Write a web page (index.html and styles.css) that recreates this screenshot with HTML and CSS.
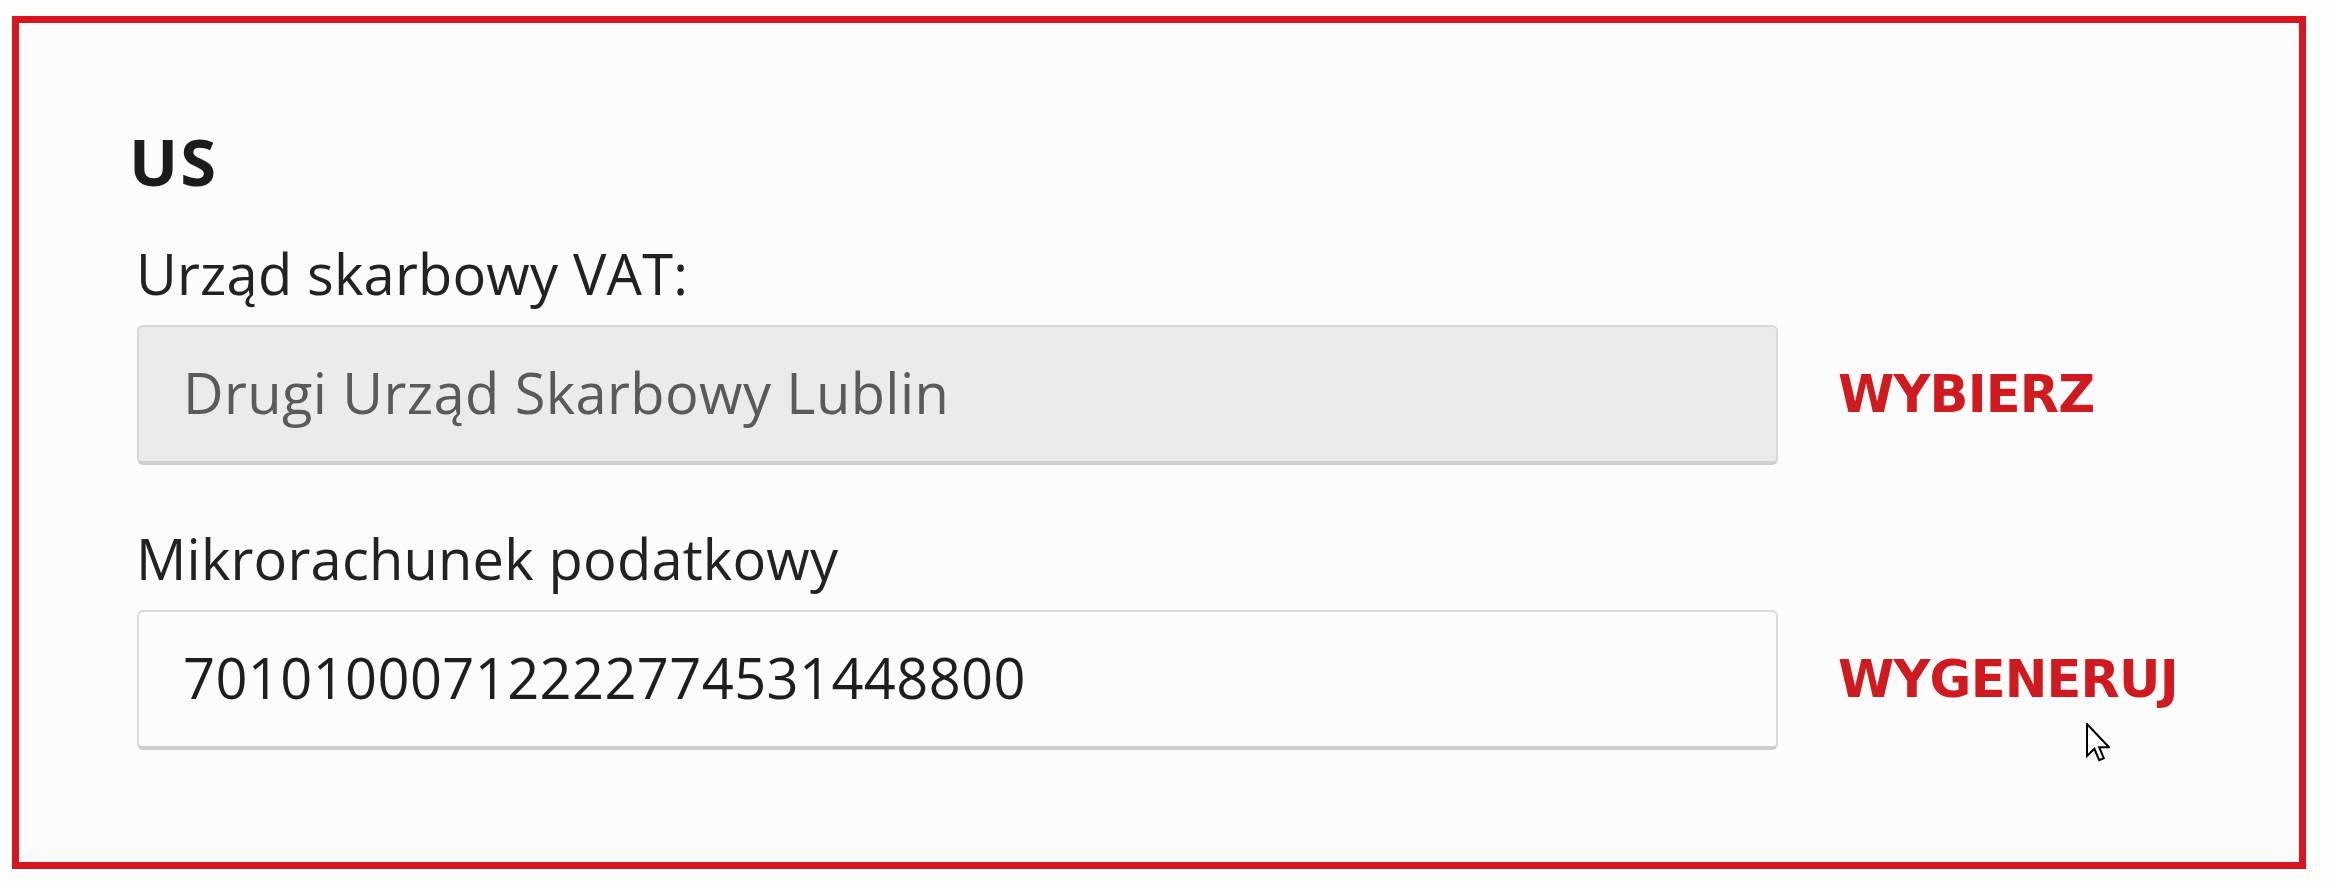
FILE: index.html
```html
<!DOCTYPE html>
<html lang="pl">
<head>
<meta charset="utf-8">
<title>US</title>
<link rel="stylesheet" href="styles.css">
</head>
<body>
<section class="panel">
  <h2 class="panel-title">US</h2>
  <div class="field">
    <label class="field-label">Urząd skarbowy VAT:</label>
    <div class="field-row">
      <div class="input input-disabled">Drugi Urząd Skarbowy Lublin</div>
      <a class="action">WYBIERZ</a>
    </div>
  </div>
  <div class="field field-second">
    <label class="field-label">Mikrorachunek podatkowy</label>
    <div class="field-row">
      <div class="input">70101000712222774531448800</div>
      <a class="action action-hover">WYGENERUJ
        <svg class="cursor" width="24" height="42" viewBox="0 0 12 21" xmlns="http://www.w3.org/2000/svg">
          <path d="M0.5 0.5 L0.5 16.5 L4.2 12.9 L6.6 18.6 L8.9 17.6 L6.6 12.1 L11.5 12.1 Z" fill="#ffffff" stroke="#000000" stroke-width="1" stroke-linejoin="miter"/>
        </svg>
      </a>
    </div>
  </div>
</section>
</body>
</html>
```
FILE: styles.css
```css
html, body {
  margin: 0;
  padding: 0;
  background: #fdfdfc;
}

body {
  width: 2330px;
  height: 888px;
  overflow: hidden;
  font-family: "Open Sans", "Liberation Sans", sans-serif;
}

.panel {
  box-sizing: border-box;
  margin: 16px 0 0 12px;
  width: 2294px;
  height: 853px;
  border: 7px solid #d7141f;
  background: #fcfcfc;
  padding: 100px 0 0 114px;
}

.panel-title {
  margin: 0 0 41px -4px;
  font-family: "Open Sans", "Liberation Sans", sans-serif;
  font-weight: 700;
  font-size: 65px;
  line-height: 76px;
  letter-spacing: 2px;
  color: #1c1c1c;
}

.field {
  display: flex;
  flex-direction: column;
  row-gap: 19px;
}

.field-second {
  margin-top: 60px;
}

.field-label {
  font-size: 56px;
  line-height: 66px;
  letter-spacing: 0.2px;
  color: #222222;
  padding-left: 3px;
}

.field-row {
  display: grid;
  grid-template-columns: 1641px auto;
  column-gap: 60px;
  align-items: center;
  margin-left: 4px;
}

.input {
  box-sizing: border-box;
  height: 140px;
  display: flex;
  align-items: center;
  padding: 0 0 4px 44px;
  border: 2px solid #d8d8d8;
  border-bottom: 4px solid #cfcfcf;
  border-radius: 6px;
  background: #fcfcfc;
  font-size: 56px;
  letter-spacing: 0.4px;
  color: #1e1e1e;
}

.input-disabled {
  background: #ebebeb;
  color: #5a5a5a;
}

.action {
  position: relative;
  font-family: "DejaVu Sans", "Liberation Sans", sans-serif;
  font-weight: 700;
  font-size: 51px;
  line-height: 60px;
  color: #cf1a1f;
  letter-spacing: -0.8px;
  text-decoration: none;
  justify-self: start;
}

.cursor {
  position: absolute;
  left: 248px;
  top: 73px;
}
```
